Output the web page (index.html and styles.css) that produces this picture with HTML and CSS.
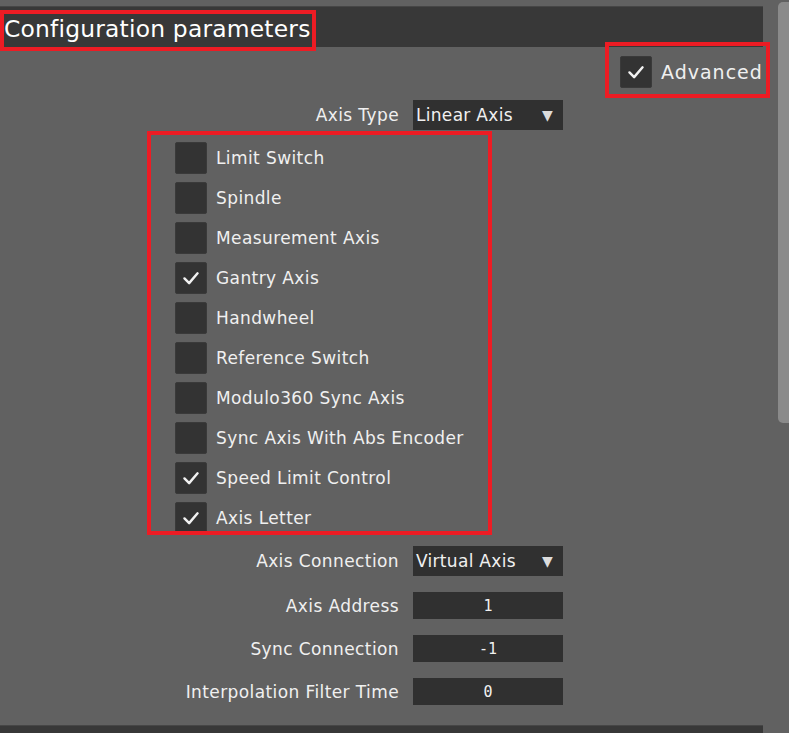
FILE: index.html
```html
<!DOCTYPE html>
<html>
<head>
<meta charset="utf-8">
<link rel="stylesheet" href="styles.css">
</head>
<body>
<div class="page">
  <div class="main">
    <div class="header"><span class="title">Configuration parameters</span></div>
    <div class="adv-row">
      <span class="cb checked"><svg viewBox="0 0 32 32" width="32" height="32"><path d="M9 16.5 L14 21.5 L23 11" fill="none" stroke="#f2f2f2" stroke-width="2.6" stroke-linecap="round" stroke-linejoin="round"/></svg></span>
      <span class="adv-label">Advanced</span>
    </div>
    <div class="field first">
      <span class="label">Axis Type</span>
      <span class="select"><span>Linear Axis</span><span class="arrow">▼</span></span>
    </div>
    <div class="checks">
      <div class="check"><span class="cb"></span><span>Limit Switch</span></div>
      <div class="check"><span class="cb"></span><span>Spindle</span></div>
      <div class="check"><span class="cb"></span><span>Measurement Axis</span></div>
      <div class="check"><span class="cb checked"><svg viewBox="0 0 32 32" width="32" height="32"><path d="M9 16.5 L14 21.5 L23 11" fill="none" stroke="#f2f2f2" stroke-width="2.6" stroke-linecap="round" stroke-linejoin="round"/></svg></span><span>Gantry Axis</span></div>
      <div class="check"><span class="cb"></span><span>Handwheel</span></div>
      <div class="check"><span class="cb"></span><span>Reference Switch</span></div>
      <div class="check"><span class="cb"></span><span>Modulo360 Sync Axis</span></div>
      <div class="check"><span class="cb"></span><span>Sync Axis With Abs Encoder</span></div>
      <div class="check"><span class="cb checked"><svg viewBox="0 0 32 32" width="32" height="32"><path d="M9 16.5 L14 21.5 L23 11" fill="none" stroke="#f2f2f2" stroke-width="2.6" stroke-linecap="round" stroke-linejoin="round"/></svg></span><span>Speed Limit Control</span></div>
      <div class="check"><span class="cb checked"><svg viewBox="0 0 32 32" width="32" height="32"><path d="M9 16.5 L14 21.5 L23 11" fill="none" stroke="#f2f2f2" stroke-width="2.6" stroke-linecap="round" stroke-linejoin="round"/></svg></span><span>Axis Letter</span></div>
    </div>
    <div class="field conn">
      <span class="label">Axis Connection</span>
      <span class="select"><span>Virtual Axis</span><span class="arrow">▼</span></span>
    </div>
    <div class="field num">
      <span class="label">Axis Address</span>
      <span class="input">1</span>
    </div>
    <div class="field num">
      <span class="label">Sync Connection</span>
      <span class="input">-1</span>
    </div>
    <div class="field num">
      <span class="label">Interpolation Filter Time</span>
      <span class="input">0</span>
    </div>
    <div class="footer"></div>
    <div class="mark mark-title"></div>
    <div class="mark mark-adv"></div>
    <div class="mark mark-checks"></div>
  </div>
  <div class="scroll"><div class="thumb"></div></div>
</div>
</body>
</html>
```
FILE: styles.css
```css
html, body {
  margin: 0;
  padding: 0;
  background: #616161;
  overflow: hidden;
}
body {
  font-family: "DejaVu Sans", sans-serif;
  color: #f0f0f0;
}
.page {
  display: flex;
  width: 789px;
  height: 733px;
  overflow: hidden;
}
.main {
  position: relative;
  width: 763px;
  flex: none;
}
.header {
  margin-top: 6px;
  height: 41px;
  background: #383838;
  border-top: 1px solid #464646;
  box-sizing: border-box;
  display: flex;
  align-items: center;
  padding-left: 4px;
}
.title {
  font-size: 23.4px;
  letter-spacing: 0.2px;
  color: #ffffff;
  margin-top: 4px;
}
.adv-row {
  display: flex;
  align-items: center;
  padding-left: 620px;
  margin-top: 9px;
  gap: 9px;
  height: 32px;
}
.adv-label {
  font-size: 19px;
  letter-spacing: 1px;
}
.cb {
  width: 32px;
  height: 32px;
  flex: none;
  box-sizing: border-box;
  background: #333333;
  border: 1px solid #3a3a3a;
  border-radius: 2px;
  display: flex;
  align-items: center;
  justify-content: center;
}
.cb svg {
  display: block;
}
.field {
  display: grid;
  grid-template-columns: 399px 150px;
  column-gap: 14px;
  align-items: center;
}
.field.first {
  margin-top: 12px;
}
.label {
  text-align: right;
  font-size: 17px;
  letter-spacing: 0.4px;
}
.select {
  height: 30px;
  background: #303030;
  display: flex;
  align-items: center;
  justify-content: space-between;
  padding: 0 10px 0 3px;
  font-size: 17px;
  letter-spacing: 0.3px;
}
.arrow {
  font-size: 14px;
  color: #dcdcdc;
}
.checks {
  display: flex;
  flex-direction: column;
  gap: 8px;
  padding-left: 175px;
  margin-top: 12px;
}
.check {
  display: flex;
  align-items: center;
  gap: 9px;
  height: 32px;
  font-size: 17px;
  letter-spacing: 0.4px;
}
.field.conn {
  margin-top: 12px;
}
.field.num {
  margin-top: 16px;
}
.input {
  height: 27px;
  background: #303030;
  display: flex;
  align-items: center;
  justify-content: center;
  font-family: "DejaVu Sans Mono", monospace;
  font-size: 15px;
}
.footer {
  margin-top: 20px;
  height: 10px;
  background: #383838;
  border-top: 1px solid #464646;
}
.mark {
  position: absolute;
  border: 4px solid #ed1c24;
  box-sizing: border-box;
}
.mark-title {
  left: 0;
  top: 10px;
  width: 316px;
  height: 41px;
}
.mark-adv {
  left: 605px;
  top: 42px;
  width: 165px;
  height: 56px;
}
.mark-checks {
  left: 147px;
  top: 131px;
  width: 345px;
  height: 404px;
}
.scroll {
  flex: 1;
  padding-left: 15px;
  padding-top: 2px;
}
.thumb {
  width: 11px;
  height: 421px;
  background: #8a8a8a;
  border-radius: 5px 0 0 5px;
}
```
